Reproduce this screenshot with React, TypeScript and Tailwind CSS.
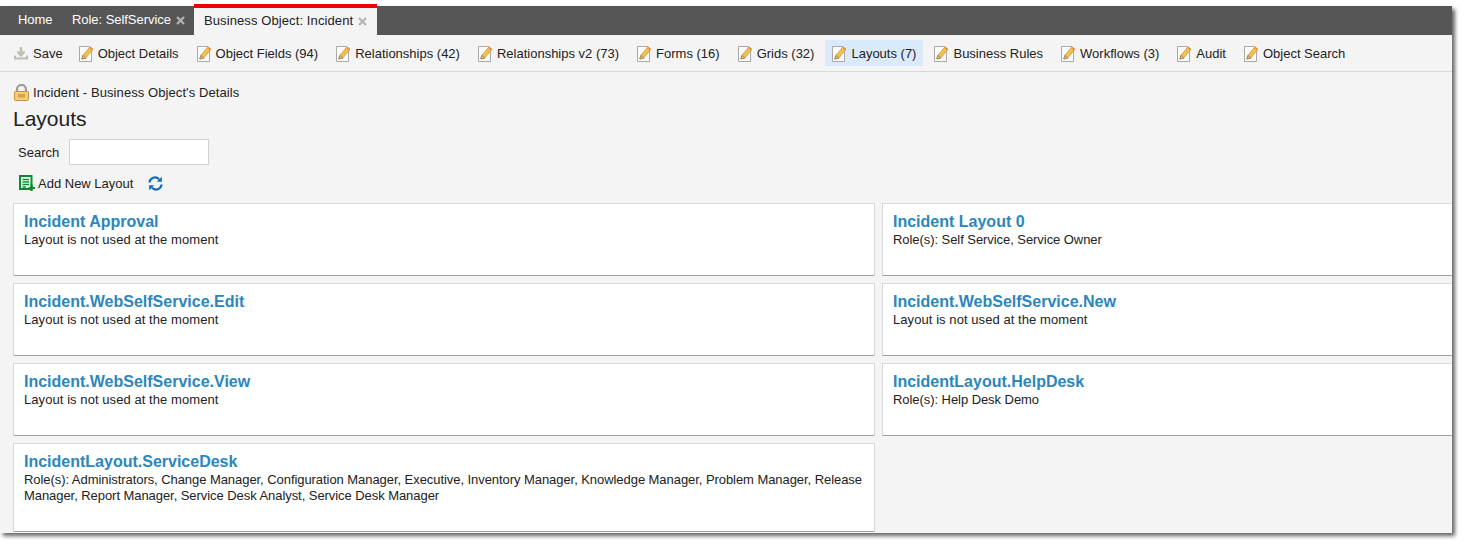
import React from 'react';

const EditIcon: React.FC = () => (
  <svg width="16" height="17" viewBox="0 0 16 17" className="shrink-0">
    <path d="M0.500 1.500h10l2 2v13h-12z" fill="#fbfbfb" stroke="#a9a9a9" />
    <path d="M2.800 14l1-3.500 7-8.500 3 2.500-7 8.500z" fill="#f3c04f" stroke="#c08f35" strokeWidth="0.7" />
    <path d="M2.800 14l1-3.500 3 2.500z" fill="#e8d3aa" stroke="#7d5c2c" strokeWidth="0.6" />
    <path d="M10.200 2.800l3 2.500 1-1.300-3-2.500z" fill="#dd8f3c" />
  </svg>
);

const SaveIcon: React.FC = () => (
  <svg width="14" height="14" viewBox="0 0 14 14" className="shrink-0">
    <path d="M7 1v8M3.500 5.500L7 9.500l3.500-4" fill="none" stroke="#bdbdb0" strokeWidth="2.400" />
    <path d="M1 9.500v3h12v-3" fill="none" stroke="#bdbdb0" strokeWidth="2" />
  </svg>
);

const LockIcon: React.FC = () => (
  <svg width="15" height="17" viewBox="0 0 15 17" className="shrink-0">
    <path d="M3 8V5.500a4.500 4.500 0 0 1 9 0V8" fill="none" stroke="#9a9a9a" strokeWidth="2.200" />
    <rect x="0.500" y="7.500" width="14" height="9" rx="1" fill="#f6cc78" stroke="#c9923a" />
    <rect x="4" y="10" width="7" height="3.500" fill="#d8a445" />
  </svg>
);

const AddIcon: React.FC = () => (
  <svg width="16" height="16" viewBox="0 0 16 16" className="shrink-0">
    <path d="M1 1h11.500v13H1z" fill="#fff" stroke="#0d8a2c" strokeWidth="2" />
    <path d="M3.500 4.500h6.500M3.500 7h6.500M3.500 9.500h6.500M3.500 12h3.500" stroke="#0d8a2c" strokeWidth="1.300" />
    <path d="M12.500 9.500v6.500M9.500 13h6.500" stroke="#0d8a2c" strokeWidth="2.200" />
  </svg>
);

const RefreshIcon: React.FC = () => (
  <svg width="15" height="15" viewBox="0 0 15 15" className="shrink-0">
    <path d="M1.500 6.500A5.500 5.500 0 0 1 11 3.200" fill="none" stroke="#1268b8" strokeWidth="2.200" />
    <path d="M13.800 0.800v5h-5z" fill="#1268b8" />
    <path d="M13.500 8.500A5.500 5.500 0 0 1 4 11.800" fill="none" stroke="#1268b8" strokeWidth="2.200" />
    <path d="M1.200 14.200v-5h5z" fill="#1268b8" />
  </svg>
);

const CloseX: React.FC = () => (
  <svg width="9" height="9" viewBox="0 0 9 9" className="shrink-0">
    <path d="M1 1l7 7M8 1l-7 7" stroke="#b4b4b4" strokeWidth="2.200" />
  </svg>
);

const toolbar = [
  { label: 'Object Details' },
  { label: 'Object Fields (94)' },
  { label: 'Relationships (42)' },
  { label: 'Relationships v2 (73)' },
  { label: 'Forms (16)' },
  { label: 'Grids (32)' },
  { label: 'Layouts (7)', active: true },
  { label: 'Business Rules' },
  { label: 'Workflows (3)' },
  { label: 'Audit' },
  { label: 'Object Search' },
];

const layouts = [
  { name: 'Incident Approval', info: 'Layout is not used at the moment' },
  { name: 'Incident Layout 0', info: 'Role(s): Self Service, Service Owner' },
  { name: 'Incident.WebSelfService.Edit', info: 'Layout is not used at the moment' },
  { name: 'Incident.WebSelfService.New', info: 'Layout is not used at the moment' },
  { name: 'Incident.WebSelfService.View', info: 'Layout is not used at the moment' },
  { name: 'IncidentLayout.HelpDesk', info: 'Role(s): Help Desk Demo' },
  {
    name: 'IncidentLayout.ServiceDesk',
    info: 'Role(s): Administrators, Change Manager, Configuration Manager, Executive, Inventory Manager, Knowledge Manager, Problem Manager, Release Manager, Report Manager, Service Desk Analyst, Service Desk Manager',
  },
];

export default function App() {
  return (
    <div className="h-[548px] w-[1467px] overflow-hidden bg-white pt-[6px] font-['Liberation_Sans',Arial,sans-serif] text-[13px] text-[#222]">
      <div className="flex h-[527px] w-[1452px] flex-col bg-[#f4f4f4] shadow-[3px_3px_4px_rgba(0,0,0,0.6)]">
        <div className="flex h-[29px] shrink-0 items-stretch bg-[#565656] text-white">
          <div className="flex w-[72px] items-center pb-px pl-[18px] tracking-[-0.1px]">Home</div>
          <div className="flex w-[122px] items-center gap-[5px] pb-px tracking-[-0.05px]">
            Role: SelfService
            <CloseX />
          </div>
          <div className="-mt-[2px] flex h-[31px] w-[183px] items-center gap-[5px] border-t-4 border-[#f00000] bg-[#f4f4f4] pb-px pl-[10px] tracking-[0.1px] text-[#222]">
            Business Object: Incident
            <CloseX />
          </div>
        </div>

        <div className="flex h-[37px] shrink-0 items-center gap-[4px] border-b border-[#d9d9d9] pl-[7px]">
          <div className="flex h-[26px] items-center gap-[5px] pl-[7px] pr-[5px]">
            <SaveIcon />
            <span className="pt-px">Save</span>
          </div>
          {toolbar.map((item) => (
            <div
              key={item.label}
              className={`flex h-[26px] items-center gap-[3px] px-[7px] ${item.active ? 'bg-[#dbeafa]' : ''}`}
            >
              <EditIcon />
              <span className="pt-px">{item.label}</span>
            </div>
          ))}
        </div>

        <div className="min-h-0 flex-1 overflow-hidden pl-[13px]">
          <div className="mt-[12px] flex h-[16px] items-center gap-[4px] pl-px tracking-[0.08px]">
            <LockIcon />
            <span className="pt-px">Incident - Business Object's Details</span>
          </div>
          <h1 className="mt-[7px] h-[24px] text-[21px] leading-[24px]">Layouts</h1>
          <div className="mt-[8px] flex h-[26px] items-center gap-[10px] pl-[5px]">
            <span className="pt-px">Search</span>
            <input className="h-[26px] w-[140px] border border-[#d2d2d2] bg-white" aria-label="Search" />
          </div>
          <div className="mt-[8px] flex h-[20px] items-center pl-[6px]">
            <AddIcon />
            <span className="ml-[3px] pt-px">Add New Layout</span>
            <span className="ml-[15px]">
              <RefreshIcon />
            </span>
          </div>
          <div className="mt-[10px] grid w-[1500px] grid-cols-[862px_600px] gap-[7px]">
            {layouts.map((l, i) => (
              <div
                key={l.name}
                className={`border border-[#d9d9d9] border-b-[#a0a0a0] bg-white px-[10px] pt-[8px] ${i === 6 ? 'h-[89px]' : 'h-[73px]'}`}
              >
                <div className="text-[16px] leading-[20px] font-bold text-[#2b86bd]">{l.name}</div>
                <div className={`leading-[16px] ${l.info.startsWith('Role') ? 'tracking-[-0.06px]' : 'tracking-[0.07px]'}`}>{l.info}</div>
              </div>
            ))}
          </div>
        </div>
      </div>
    </div>
  );
}
